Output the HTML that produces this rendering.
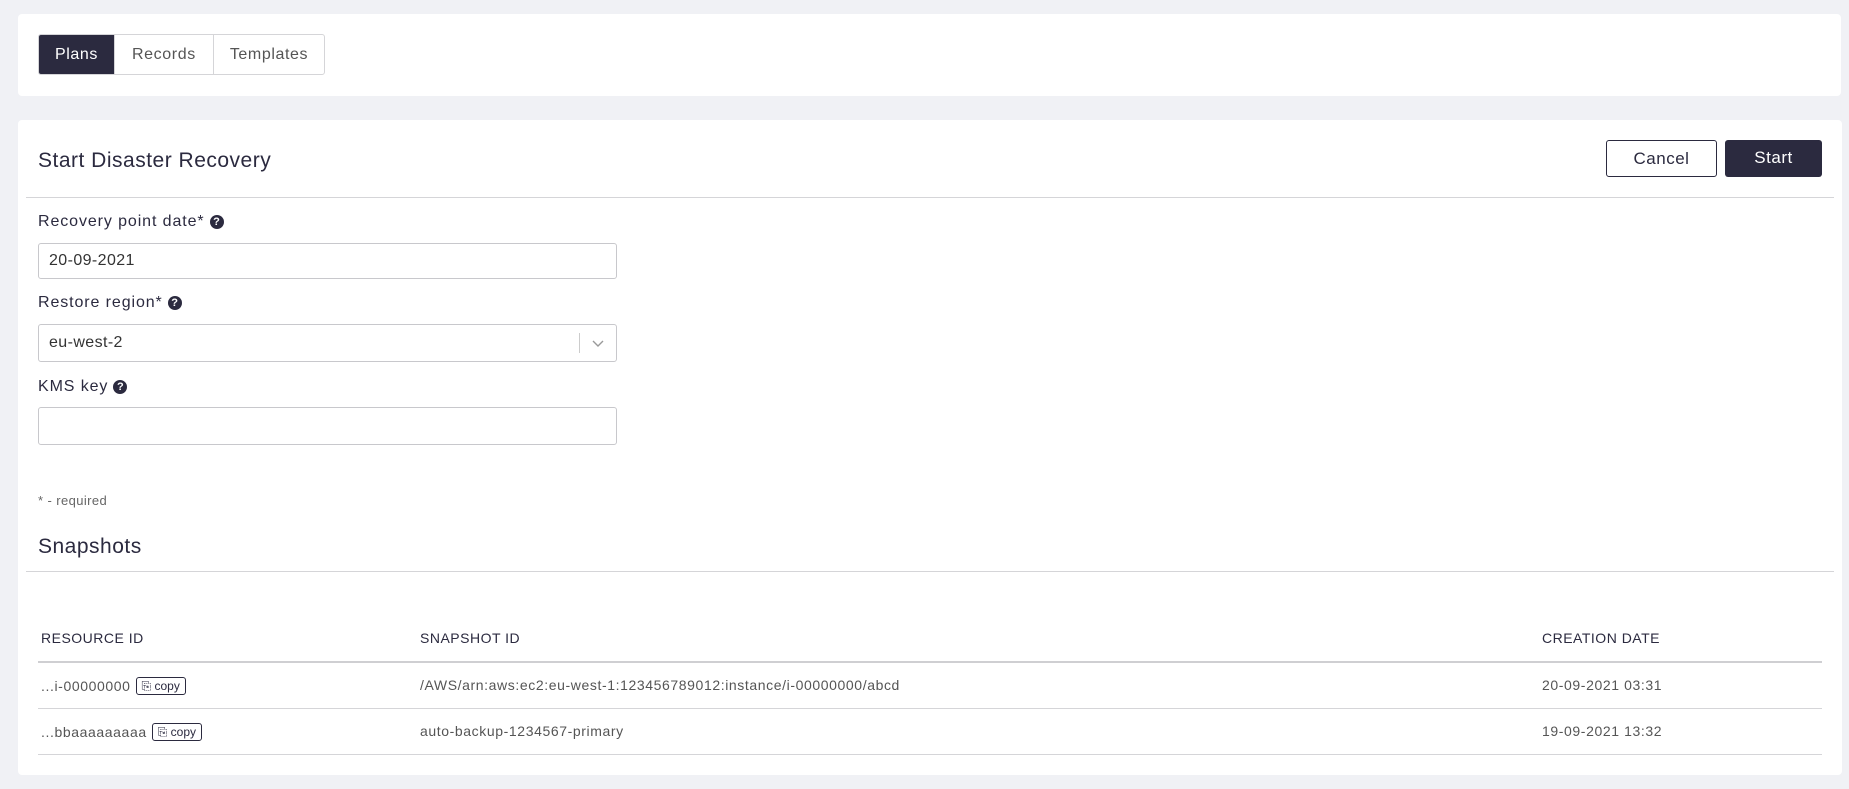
<!DOCTYPE html>
<html><head><style>
*{box-sizing:border-box;margin:0;padding:0}
body{width:1849px;height:789px;background:#f0f1f5;font-family:"Liberation Sans",sans-serif;color:#2b2a3f;position:relative;overflow:hidden}
.card{position:absolute;background:#fff;border-radius:4px}
.abs{position:absolute;white-space:nowrap}
.tabs{position:absolute;left:38px;top:34px;height:41px;display:flex;border:1px solid #d5d5d8;border-radius:3px;overflow:hidden}
.tabs div{font-size:16px;line-height:39px;padding:0 16px;color:#555;border-left:1px solid #d5d5d8;letter-spacing:0.6px}
.tabs div:first-child{background:#2b2a3f;color:#fff;border-left:none}
.hr{position:absolute;height:1px;background:#d5d5d8}
.lbl{font-size:16px;color:#2b2a3f;letter-spacing:0.9px}
.q{display:inline-block;width:14px;height:14px;border-radius:50%;background:#2b2a3f;color:#fff;font-size:11px;line-height:14px;text-align:center;font-weight:bold;vertical-align:1px;margin-left:5px;letter-spacing:0}
.inp{position:absolute;left:38px;width:579px;border:1px solid #c8c8cc;border-radius:3px;font-size:16px;padding-left:10px;color:#333;letter-spacing:0.4px}
.btn{position:absolute;top:140px;height:37px;border-radius:3px;font-size:17px;text-align:center;line-height:35px;letter-spacing:0.5px}
.th{font-size:14px;color:#2b2a3f;letter-spacing:0.5px}
.td{font-size:14px;color:#555;letter-spacing:0.6px}
.cp{display:inline-block;border:1px solid #2b2a3f;border-radius:3px;font-size:12px;color:#2b2a3f;padding:0 5px;line-height:16px;margin-left:5px;vertical-align:1px;letter-spacing:0}
</style></head><body>
<div class="card" style="left:18px;top:14px;width:1823px;height:82px"></div>
<div class="tabs"><div>Plans</div><div style="padding:0 17px">Records</div><div>Templates</div></div>

<div class="card" style="left:18px;top:120px;width:1824px;height:655px"></div>
<div class="abs" style="left:38px;top:149px;font-size:21px;letter-spacing:0.5px">Start Disaster Recovery</div>
<div class="btn" style="left:1606px;width:111px;border:1px solid #2b2a3f;color:#2b2a3f">Cancel</div>
<div class="btn" style="left:1725px;width:97px;background:#2b2a3f;color:#fff">Start</div>
<div class="hr" style="left:26px;top:197px;width:1808px"></div>

<div class="abs lbl" style="left:38px;top:213px">Recovery point date*<span class="q">?</span></div>
<div class="inp" style="top:243px;height:36px;line-height:34px">20-09-2021</div>
<div class="abs lbl" style="left:38px;top:294px">Restore region*<span class="q">?</span></div>
<div class="inp" style="top:324px;height:38px;line-height:36px">eu-west-2
<span style="position:absolute;left:540px;top:8px;width:1px;height:20px;background:#ccc"></span>
<svg style="position:absolute;left:552px;top:13px" width="14" height="10"><path d="M2 3l5 5 5-5" fill="none" stroke="#999" stroke-width="1.4"/></svg></div>
<div class="abs lbl" style="left:38px;top:378px">KMS key<span class="q">?</span></div>
<div class="inp" style="top:407px;height:38px"></div>

<div class="abs" style="left:38px;top:493px;font-size:13px;color:#666;letter-spacing:0.4px">* - required</div>
<div class="abs" style="left:38px;top:535px;font-size:21px;letter-spacing:0.5px">Snapshots</div>
<div class="hr" style="left:26px;top:571px;width:1808px"></div>

<div class="abs th" style="left:41px;top:630px">RESOURCE ID</div>
<div class="abs th" style="left:420px;top:630px">SNAPSHOT ID</div>
<div class="abs th" style="left:1542px;top:630px">CREATION DATE</div>
<div class="hr" style="left:38px;top:661px;width:1784px;height:2px;background:#cfcfd2"></div>
<div class="abs td" style="left:41px;top:677px">...i-00000000<span class="cp">⎘ copy</span></div>
<div class="abs td" style="left:420px;top:677px">/AWS/arn:aws:ec2:eu-west-1:123456789012:instance/i-00000000/abcd</div>
<div class="abs td" style="left:1542px;top:677px">20-09-2021 03:31</div>
<div class="hr" style="left:38px;top:708px;width:1784px"></div>
<div class="abs td" style="left:41px;top:723px">...bbaaaaaaaaa<span class="cp">⎘ copy</span></div>
<div class="abs td" style="left:420px;top:723px">auto-backup-1234567-primary</div>
<div class="abs td" style="left:1542px;top:723px">19-09-2021 13:32</div>
<div class="hr" style="left:38px;top:754px;width:1784px"></div>
</body></html>
